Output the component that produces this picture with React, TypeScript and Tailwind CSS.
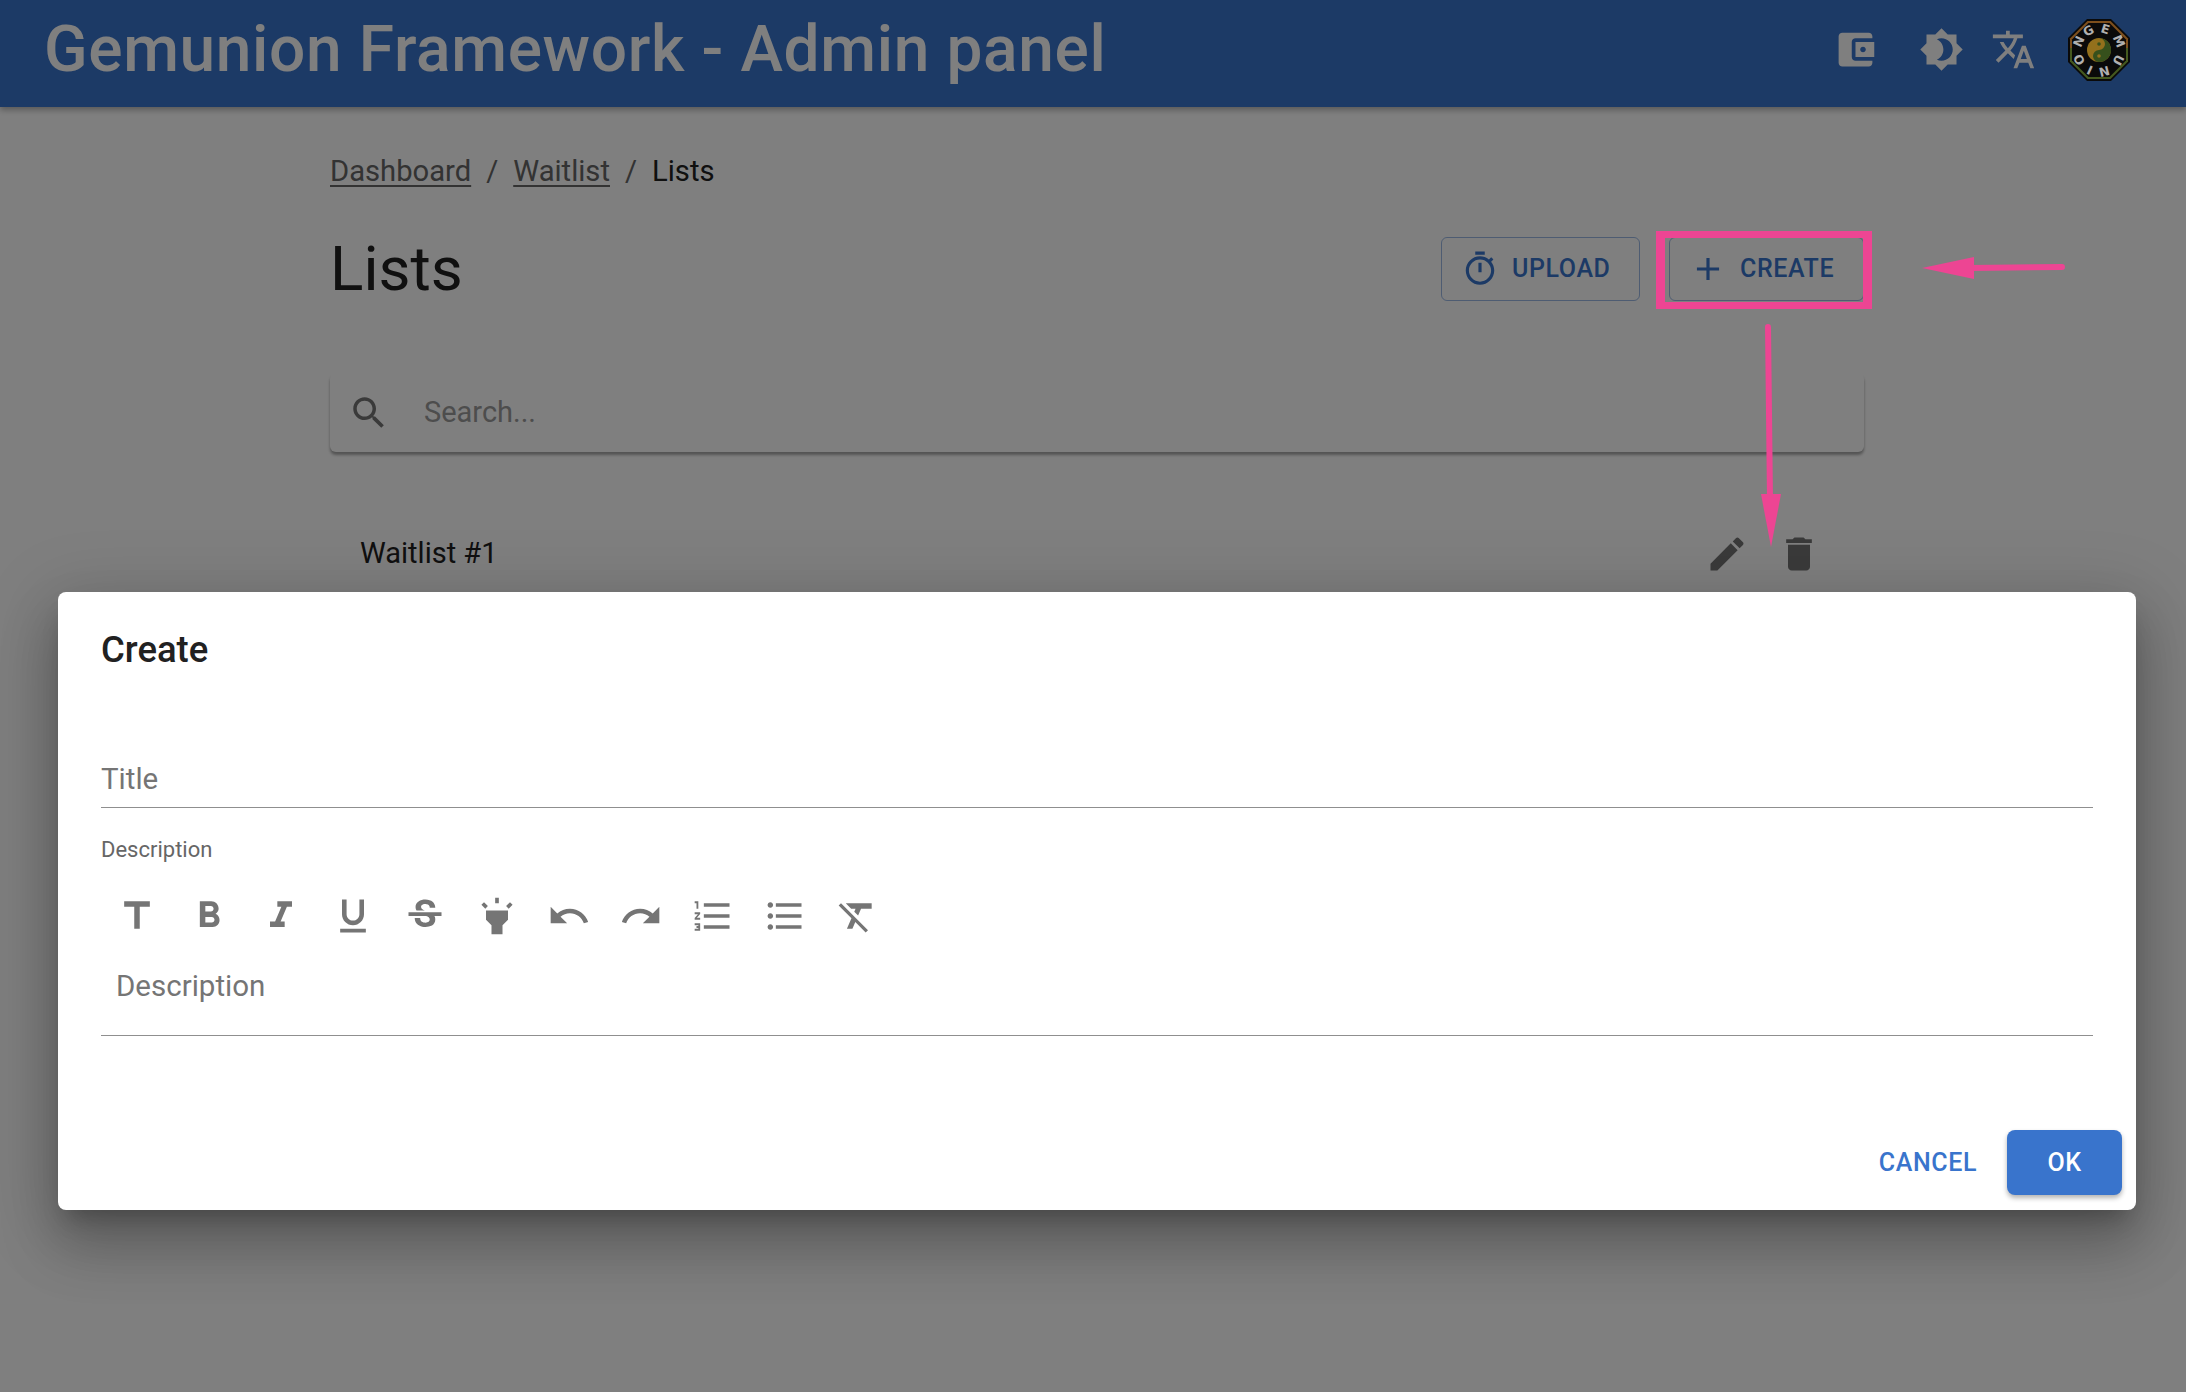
import React from 'react';

const paths = {
  wallet: 'M21 18v1c0 1.1-.9 2-2 2H5c-1.11 0-2-.9-2-2V5c0-1.1.89-2 2-2h14c1.1 0 2 .9 2 2v1h-9c-1.11 0-2 .9-2 2v8c0 1.1.89 2 2 2h9zm-9-2h10V8H12v8zm4-2.5c-.83 0-1.5-.67-1.5-1.5s.67-1.5 1.5-1.5 1.5.67 1.5 1.5-.67 1.5-1.5 1.5z',
  brightness: 'M20 8.69V4h-4.69L12 .69 8.69 4H4v4.69L.69 12 4 15.31V20h4.69L12 23.31 15.31 20H20v-4.69L23.31 12 20 8.69zM12 18c-.89 0-1.74-.2-2.5-.55C11.56 16.5 13 14.42 13 12s-1.44-4.5-3.5-5.45C10.26 6.2 11.11 6 12 6c3.31 0 6 2.69 6 6s-2.69 6-6 6z',
  translate: 'M12.87 15.07l-2.54-2.51.03-.03c1.74-1.94 2.98-4.17 3.71-6.53H17V4h-7V2H8v2H1v1.99h11.17C11.5 7.92 10.44 9.75 9 11.35 8.07 10.32 7.3 9.19 6.69 8h-2c.73 1.63 1.73 3.17 2.98 4.56l-5.09 5.02L4 19l5-5 3.11 3.11.76-2.04zM18.5 10h-2L12 22h2l1.12-3h4.75L21 22h2l-4.5-12zm-2.62 7l1.62-4.33L19.12 17h-3.24z',
  timer: 'M15 1H9v2h6V1zm-4 13h2V8h-2v6zm8.03-6.61l1.42-1.42c-.43-.51-.9-.99-1.41-1.41l-1.42 1.42C16.07 4.74 14.12 4 12 4c-4.97 0-9 4.03-9 9s4.02 9 9 9 9-4.03 9-9c0-2.12-.74-4.07-1.97-5.61zM12 20c-3.87 0-7-3.13-7-7s3.13-7 7-7 7 3.13 7 7-3.13 7-7 7z',
  add: 'M19 13h-6v6h-2v-6H5v-2h6V5h2v6h6v2z',
  search: 'M15.5 14h-.79l-.28-.27C15.41 12.59 16 11.11 16 9.5 16 5.91 13.09 3 9.5 3S3 5.91 3 9.5 5.91 16 9.5 16c1.61 0 3.09-.59 4.23-1.57l.27.28v.79l5 4.99L20.49 19l-4.99-5zm-6 0C7.01 14 5 11.99 5 9.5S7.01 5 9.5 5 14 7.01 14 9.5 11.99 14 9.5 14z',
  edit: 'M3 17.25V21h3.75L17.81 9.94l-3.75-3.75L3 17.25zM20.71 7.04c.39-.39.39-1.02 0-1.41l-2.34-2.34a.9959.9959 0 00-1.41 0l-1.83 1.83 3.75 3.75 1.83-1.83z',
  trash: 'M6 19c0 1.1.9 2 2 2h8c1.1 0 2-.9 2-2V7H6v12zM19 4h-3.5l-1-1h-5l-1 1H5v2h14V4z',
  title: 'M5 4v3h5.5v12h3V7H19V4z',
  bold: 'M15.6 10.79c.97-.67 1.65-1.77 1.65-2.79 0-2.26-1.75-4-4-4H7v14h7.04c2.09 0 3.71-1.7 3.71-3.79 0-1.52-.86-2.82-2.15-3.42zM10 6.5h3c.83 0 1.5.67 1.5 1.5s-.67 1.5-1.5 1.5h-3v-3zm3.5 9H10v-3h3.5c.83 0 1.5.67 1.5 1.5s-.67 1.5-1.5 1.5z',
  italic: 'M10 4v3h2.21l-3.42 8H6v3h8v-3h-2.21l3.42-8H18V4z',
  underline: 'M12 17c3.31 0 6-2.69 6-6V3h-2.5v8c0 1.93-1.57 3.5-3.5 3.5S8.5 12.93 8.5 11V3H6v8c0 3.31 2.69 6 6 6zm-7 2v2h14v-2H5z',
  strike: 'M6.85 7.08C6.85 4.37 9.45 3 12.24 3c1.64 0 3 .49 3.9 1.28.77.65 1.46 1.73 1.46 3.24h-3.01c0-.31-.05-.59-.15-.85-.29-.86-1.2-1.28-2.25-1.28-1.86 0-2.34 1.02-2.34 1.7 0 .48.25.88.74 1.21.38.25.77.48 1.41.7H7.39c-.21-.34-.54-.89-.54-1.92zM21 12v-2H3v2h9.62c1.15.45 1.96.75 1.96 1.97 0 1-.81 1.67-2.28 1.67-1.54 0-2.93-.54-2.93-2.51H6.4c0 .55.08 1.13.24 1.58.81 2.29 3.29 3.3 5.67 3.3 2.27 0 5.3-.89 5.3-4.05 0-.3-.01-1.16-.48-1.94H21V12z',
  highlight: 'M6 14l3 3v5h6v-5l3-3V9H6zm5-12h2v3h-2zM3.5 5.875L4.914 4.46l2.12 2.122L5.62 7.997zm13.46.71l2.123-2.12 1.414 1.414L18.375 8z',
  undo: 'M12.5 8c-2.65 0-5.05.99-6.9 2.6L2 7v9h9l-3.62-3.62c1.39-1.16 3.16-1.88 5.12-1.88 3.54 0 6.55 2.31 7.6 5.5l2.37-.78C21.08 11.03 17.15 8 12.5 8z',
  redo: 'M18.4 10.6C16.55 8.99 14.15 8 11.5 8c-4.65 0-8.58 3.03-9.96 7.22L3.9 16c1.05-3.19 4.05-5.5 7.6-5.5 1.95 0 3.73.72 5.12 1.88L13 16h9V7l-3.6 3.6z',
  numbered: 'M2 17h2v.5H3v1h1v.5H2v1h3v-4H2v1zm1-9h1V4H2v1h1v3zm-1 3h1.8L2 13.1v.9h3v-1H3.2L5 10.9V10H2v1zm5-6v2h14V5H7zm0 14h14v-2H7v2zm0-6h14v-2H7v2z',
  bulleted: 'M4 10.5c-.83 0-1.5.67-1.5 1.5s.67 1.5 1.5 1.5 1.5-.67 1.5-1.5-.67-1.5-1.5-1.5zm0-6c-.83 0-1.5.67-1.5 1.5S3.17 7.5 4 7.5 5.5 6.83 5.5 6 4.83 4.5 4 4.5zm0 12c-.83 0-1.5.68-1.5 1.5s.68 1.5 1.5 1.5 1.5-.68 1.5-1.5-.67-1.5-1.5-1.5zM7 19h14v-2H7v2zm0-6h14v-2H7v2zm0-8v2h14V5H7z',
  clear: 'M3.27 5L2 6.27l6.97 6.97L6.5 19h3l1.57-3.66L16.73 21 18 19.73 3.55 5.27 3.27 5zM6 5v.18L8.82 8h2.4l-.72 1.68 2.1 2.1L14.21 8H20V5H6z',
};

const Icon = ({ d, className }: { d: string; className: string }) => (
  <svg viewBox="0 0 24 24" fill="currentColor" className={className}>
    <path d={d} />
  </svg>
);

const Logo = () => (
  <svg viewBox="0 0 64 64" className="w-[64px] h-[64px]">
    <polygon points="20,1 44,1 63,20 63,44 44,63 20,63 1,44 1,20" fill="#0a0a0a" />
    <polygon points="20.5,3 43.5,3 61,20.5 61,30 3,30 3,20.5" fill="#7d4f1d" />
    <polygon points="3,30 61,30 61,43.5 43.5,61 20.5,61 3,43.5" fill="#45591f" />
    <polygon points="21.5,5 42.5,5 59,21.5 59,42.5 42.5,59 21.5,59 5,42.5 5,21.5" fill="#0a0a0a" />
    <defs>
      <path id="logo-ring" d="M19.6 19.6 A17.5 17.5 0 1 1 19.5 19.7" />
    </defs>
    <text fontFamily="'DejaVu Sans', sans-serif" fontSize="12.5" fontWeight="700" fill="#b0b0b0">
      <textPath href="#logo-ring" textLength="108" lengthAdjust="spacing">GEMUNION</textPath>
    </text>
    <circle cx="32" cy="32" r="12" fill="#93701c" />
    <path d="M32 20 A12 12 0 0 1 32 44 A6 6 0 0 1 32 32 A6 6 0 0 0 32 20" fill="#36501c" />
    <circle cx="32" cy="26" r="1.8" fill="#36501c" />
    <circle cx="32" cy="38" r="1.8" fill="#93701c" />
  </svg>
);

const toolbar = [
  paths.title, paths.bold, paths.italic, paths.underline, paths.strike, paths.highlight,
  paths.undo, paths.redo, paths.numbered, paths.bulleted, paths.clear,
];

export default function App() {
  return (
    <div className="relative h-[1392px] w-[2186px] overflow-hidden bg-white font-['Roboto',sans-serif]">
      {/* page under the modal */}
      <header className="h-[107px] bg-[#3974cc] flex items-center pl-[44px] pb-[8px] shadow-[0_3px_6px_rgba(0,0,0,0.3)]">
        <h1 className="text-white text-[64px] font-medium tracking-[0.65px] leading-none flex-1">Gemunion Framework - Admin panel</h1>
        <div className="flex items-center text-white">
          <Icon d={paths.wallet} className="w-[45px] h-[45px] mr-[41px]" />
          <Icon d={paths.brightness} className="w-[45px] h-[45px] mr-[27px]" />
          <Icon d={paths.translate} className="w-[45px] h-[45px] mr-[31px]" />
          <div className="mr-[55px] w-[64px] h-[64px]" />
        </div>
      </header>

      <main className="ml-[330px] w-[1534px]">
        <nav className="flex items-center h-[34px] mt-[48px] text-[29.2px] text-[#666666]">
          <a className="underline underline-offset-4">Dashboard</a>
          <span className="mx-[15px]">/</span>
          <a className="underline underline-offset-4">Waitlist</a>
          <span className="mx-[15px]">/</span>
          <span className="text-[#212121]">Lists</span>
        </nav>
        <div className="flex items-center justify-between mt-[48px] h-[64px]">
          <h2 className="text-[62px] text-[#212121] leading-none">Lists</h2>
          <div className="flex gap-[29px]">
            <button className="flex items-center h-[64px] w-[199px] pl-[19px] rounded-[6px] border border-[#3974cc]/50 text-[#3974cc] text-[25px] font-medium tracking-[0.6px]">
              <Icon d={paths.timer} className="w-[38px] h-[38px] mr-[13px]" />
              UPLOAD
            </button>
            <button className="flex items-center h-[64px] w-[195px] pl-[19px] rounded-[6px] border border-[#3974cc]/50 text-[#3974cc] text-[25px] font-medium tracking-[0.6px]">
              <Icon d={paths.add} className="w-[38px] h-[38px] mr-[13px]" />
              CREATE
            </button>
          </div>
        </div>
        <div className="flex items-center h-[79px] mt-[72px] rounded-[6px] bg-white pl-[18px] shadow-[0_3px_3px_rgba(0,0,0,0.35)]">
          <Icon d={paths.search} className="w-[42px] h-[42px] text-[#757575]" />
          <span className="ml-[34px] text-[29px] text-[#9a9a9a]">Search...</span>
        </div>
        <div className="flex items-center justify-between h-[68px] mt-[68px] pl-[30px] pr-[43px]">
          <span className="text-[29px] text-[#212121]">Waitlist #1</span>
          <div className="flex gap-[28px] text-[#757575]">
            <Icon d={paths.edit} className="w-[44px] h-[44px]" />
            <Icon d={paths.trash} className="w-[44px] h-[44px]" />
          </div>
        </div>
      </main>

      {/* backdrop and dialog */}
      <div className="absolute inset-0 bg-black/50 pt-[592px] px-[50px]">
        <div className="h-[618px] w-[2078px] ml-[8px] rounded-[8px] bg-white pt-[38px] px-[43px] shadow-[0_16px_22px_-10px_rgba(0,0,0,0.25),0_36px_56px_4px_rgba(0,0,0,0.18),0_14px_68px_12px_rgba(0,0,0,0.15)] flex flex-col">
          <h3 className="text-[36.5px] font-medium text-[#212121] leading-[40px]">Create</h3>
          <div className="mt-[91px] h-[47px] border-b border-[#8f8f8f] text-[29.5px] leading-[37px] text-[#757575]">Title</div>
          <div className="mt-[30px] text-[22px] leading-[24px] text-[#666666]">Description</div>
          <div className="flex mt-[34px] h-[40px] items-center">
            {toolbar.map((d) => (
              <div key={d} className="w-[72px] flex justify-center">
                <Icon d={d} className="w-[44px] h-[44px] shrink-0 text-[#757575]" />
              </div>
            ))}
          </div>
          <div className="mt-[32px] h-[68px] border-b border-[#8f8f8f] pl-[15px] text-[29.5px] leading-[37px] text-[#757575]">Description</div>
          <div className="flex items-center justify-end mt-[94px] -mr-[29px]">
            <span className="text-[#3974cc] text-[25px] font-medium tracking-[0.6px] mr-[30px]">CANCEL</span>
            <button className="w-[115px] h-[65px] rounded-[8px] bg-[#3974cc] text-white text-[25px] font-medium tracking-[0.6px] shadow-[0_3px_5px_rgba(0,0,0,0.3)]">OK</button>
          </div>
        </div>
      </div>

      {/* logo sits on the dimmed header */}
      <div className="absolute left-[2067px] top-[18px]">
        <Logo />
      </div>

      {/* pink annotations */}
      <div className="absolute left-[1656px] top-[231px] w-[216px] h-[78px] border-x-[9px] border-y-[7px] border-[#ed4593]" />
      <svg viewBox="0 0 2186 1392" className="absolute inset-0 w-[2186px] h-[1392px] pointer-events-none">
        <path d="M2062 267 L1970 268" stroke="#ed4593" strokeWidth="6" strokeLinecap="round" fill="none" />
        <polygon points="1922,268 1974,257 1974,279" fill="#ed4593" />
        <path d="M1768 327 L1770 500" stroke="#ed4593" strokeWidth="6" strokeLinecap="round" fill="none" />
        <polygon points="1771,547 1761,494 1781,494" fill="#ed4593" />
      </svg>
    </div>
  );
}
